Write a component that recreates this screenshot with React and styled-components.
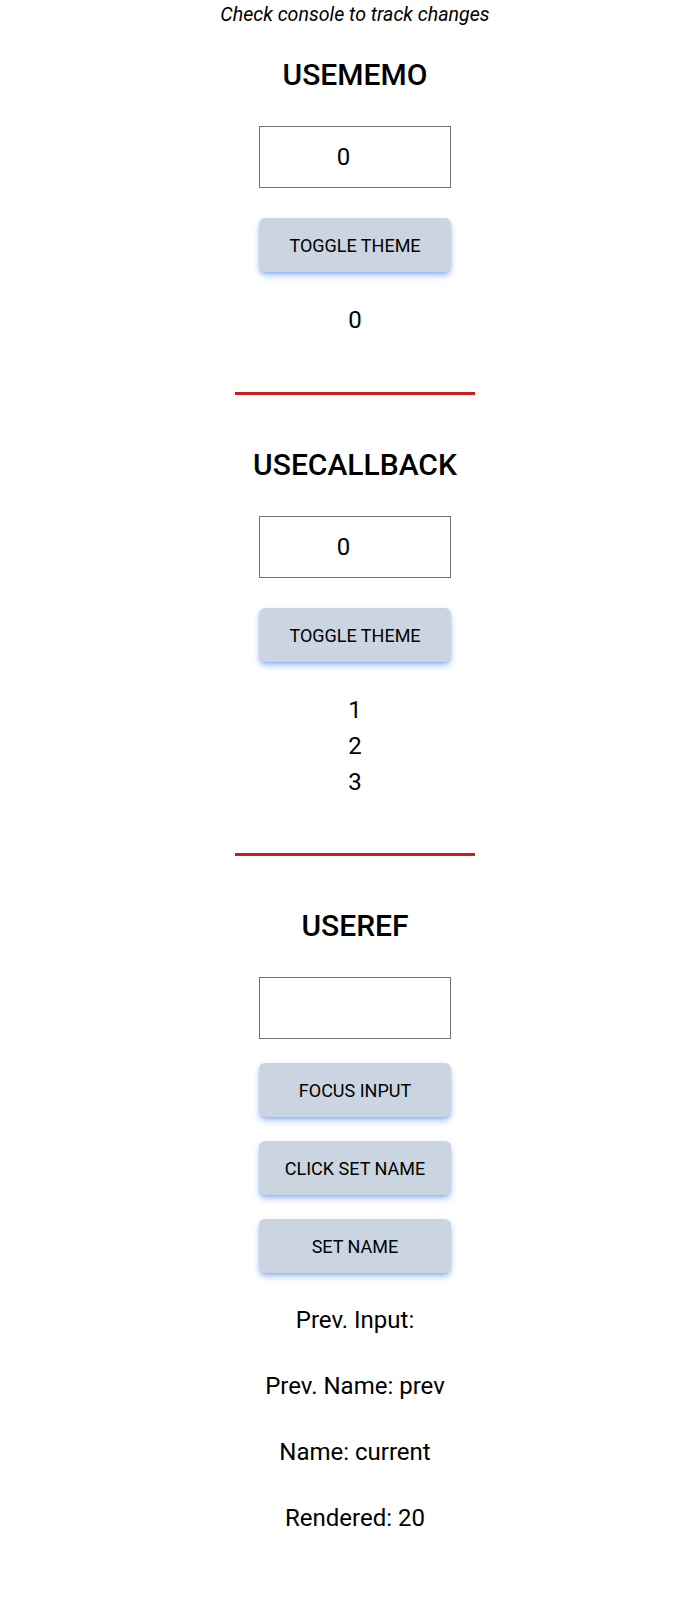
import React from "react";
import styled, { createGlobalStyle } from "styled-components";

const GlobalStyle = createGlobalStyle`
  html, body {
    margin: 0;
    padding: 0;
    background: #ffffff;
  }
  body {
    font-family: Roboto, "Liberation Sans", sans-serif;
    color: #000000;
  }
`;

export default function App() {
  return (
    <>
      <GlobalStyle />
      <Page>
        <Note>Check console to track changes</Note>

        <Section>
          <Title>USEMEMO</Title>
          <NumberInput type="number" defaultValue={0} />
          <Button $top={30}>TOGGLE THEME</Button>
          <Output>0</Output>
        </Section>

        <Divider $top={58} />

        <Section>
          <Title>USECALLBACK</Title>
          <NumberInput type="number" defaultValue={0} />
          <Button $top={30}>TOGGLE THEME</Button>
          <List>
            {[1, 2, 3].map((n) => (
              <ListItem key={n}>{n}</ListItem>
            ))}
          </List>
        </Section>

        <Divider $top={53} />

        <Section>
          <Title>USEREF</Title>
          <NumberInput type="text" defaultValue="" />
          <Button $top={24}>FOCUS INPUT</Button>
          <Button $top={24}>CLICK SET NAME</Button>
          <Button $top={24}>SET NAME</Button>
          <Lines>
            <Line>Prev. Input:</Line>
            <Line>Prev. Name: prev</Line>
            <Line>Name: current</Line>
            <Line>Rendered: 20</Line>
          </Lines>
        </Section>
      </Page>
    </>
  );
}

const Page = styled.div`
  display: flex;
  flex-direction: column;
  align-items: center;
  box-sizing: border-box;
  width: 100%;
  padding: 3px 0 60px 14px;
`;

const Note = styled.p`
  margin: 0;
  font-size: 19.6px;
  font-style: italic;
`;

const Section = styled.section`
  display: flex;
  flex-direction: column;
  align-items: center;
`;

const Title = styled.h2`
  margin: 31px 0 0;
  font-size: 30px;
  font-weight: 500;
  line-height: normal;
`;

const NumberInput = styled.input`
  box-sizing: border-box;
  width: 192px;
  height: 62px;
  margin-top: 34px;
  padding: 0 25px 0 2px;
  border: 1px solid #6b7280;
  border-radius: 0;
  background: #ffffff;
  font-family: Roboto, "Liberation Sans", sans-serif;
  font-size: 24px;
  color: #000000;
  text-align: center;
  outline: none;
  -moz-appearance: textfield;

  &::-webkit-outer-spin-button,
  &::-webkit-inner-spin-button {
    -webkit-appearance: none;
    margin: 0;
  }
`;

const Button = styled.button`
  box-sizing: border-box;
  width: 192px;
  height: 54px;
  margin-top: ${(p) => p.$top}px;
  border: none;
  border-radius: 6px;
  background: #cbd5e1;
  box-shadow: 0 4px 7px -1px rgba(59, 130, 246, 0.5),
    0 2px 4px -2px rgba(59, 130, 246, 0.5);
  font-family: Roboto, "Liberation Sans", sans-serif;
  font-size: 18px;
  color: #000000;
  cursor: pointer;
`;

const Output = styled.p`
  margin: 34px 0 0;
  font-size: 24px;
`;

const List = styled.ul`
  margin: 30px 0 0;
  padding: 0;
  list-style: none;
  text-align: center;
`;

const ListItem = styled.li`
  font-size: 24px;
  line-height: 36px;
`;

const Divider = styled.hr`
  width: 240px;
  height: 3px;
  margin: ${(p) => p.$top}px 0 21px;
  border: none;
  background: #c81e1e;
`;

const Lines = styled.div`
  display: flex;
  flex-direction: column;
  align-items: center;
  gap: 38px;
  margin-top: 33px;
`;

const Line = styled.p`
  margin: 0;
  font-size: 24px;
`;
